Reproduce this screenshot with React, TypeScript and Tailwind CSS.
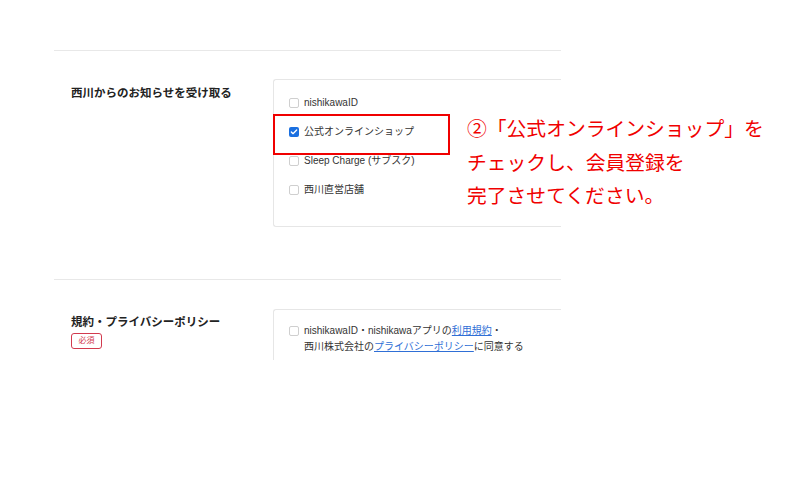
import { Check } from 'lucide-react';

const FONT = "font-['Liberation_Sans','Noto_Sans_CJK_JP',sans-serif]";

function Box({ checked = false }: { checked?: boolean }) {
  if (checked) {
    return (
      <span className="flex h-[10px] w-[10px] shrink-0 items-center justify-center rounded-[2px] bg-[#1a6fe0]">
        <Check className="h-[8px] w-[8px] text-white" strokeWidth={4} />
      </span>
    );
  }
  return <span className="block h-[10px] w-[10px] shrink-0 rounded-[2px] border border-[#cfcfcf] bg-white" />;
}

const options = [
  { label: 'nishikawaID', checked: false },
  { label: '公式オンラインショップ', checked: true },
  { label: 'Sleep Charge (サブスク)', checked: false },
  { label: '西川直営店舗', checked: false },
];

export default function App() {
  return (
    <div className={`relative h-[500px] w-[800px] bg-white ${FONT}`}>
      <div className="ml-[54px] w-[507px] pt-[50px]">
        <div className="h-[310px] overflow-hidden border-t border-[#e8e8e8]">
          {/* お知らせ */}
          <div className="flex border-b border-[#e8e8e8] pb-[52px] pt-[28px]">
            <div className="w-[219px] pl-[17px]">
              <p className="mt-[6px] text-[11.5px] font-bold leading-[16px] text-[#222]">
                西川からのお知らせを受け取る
              </p>
            </div>
            <div className="h-[148px] flex-1 rounded-l-[3px] border-y border-l border-[#e6e6e6] pl-[15px] pt-[8px]">
              {options.map((o) => (
                <label key={o.label} className="flex h-[29px] items-center gap-[5px] text-[10px] text-[#333]">
                  <Box checked={o.checked} />
                  <span>{o.label}</span>
                </label>
              ))}
            </div>
          </div>

          {/* 規約 */}
          <div className="flex pt-[29px]">
            <div className="w-[219px] pl-[17px]">
              <p className="mt-[5px] text-[11.5px] font-bold leading-[16px] text-[#222]">
                規約・プライバシーポリシー
              </p>
              <span className="mt-[3px] flex h-[16px] w-[31px] items-center justify-center rounded-[3px] border-[1.5px] border-[#d23a4e] text-[8px] text-[#d23a4e]">
                必須
              </span>
            </div>
            <div className="h-[80px] flex-1 rounded-tl-[3px] border-l border-t border-[#e6e6e6] pl-[15px] pt-[13px]">
              <div className="flex gap-[5px]">
                <span className="mt-[3px] block">
                  <Box />
                </span>
                <p className="text-[10px] leading-[16px] text-[#333]">
                  nishikawaID・nishikawaアプリの
                  <span className="text-[#2f6fd6] underline">利用規約</span>・
                  <br />
                  西川株式会社の
                  <span className="text-[#2f6fd6] underline">プライバシーポリシー</span>
                  に同意する
                </p>
              </div>
            </div>
          </div>
        </div>
      </div>

      {/* annotation */}
      <div className="absolute left-[273px] top-[114px] h-[41px] w-[177px] border-2 border-[#f00000]" />
      <p className="absolute left-[467px] top-[111px] text-[19.8px] leading-[33.5px] text-[#f00000] font-['Noto_Sans_CJK_JP',sans-serif]">
        ②「公式オンラインショップ」を
        <br />
        チェックし、会員登録を
        <br />
        完了させてください。
      </p>
    </div>
  );
}
